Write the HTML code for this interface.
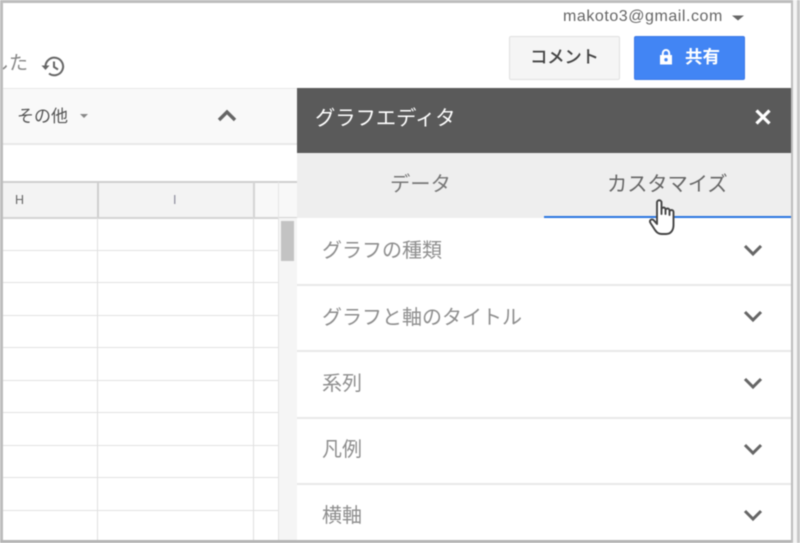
<!DOCTYPE html>
<html><head><meta charset="utf-8"><style>
html,body{margin:0;padding:0;background:#fff}
#p{position:relative;width:800px;height:543px;overflow:hidden;background:#fff;font-family:"Liberation Sans","Noto Sans CJK JP",sans-serif;filter:blur(.5px)}
#p div{position:absolute;box-sizing:border-box}
.t{white-space:nowrap;line-height:1}
.hl{left:3px;width:275px;height:1px;background:#e2e2e2}
.vl{top:218px;width:1px;height:322px;background:#e0e0e0}
.sep{left:297px;width:494px;height:2px;background:#e8e8e8}
.lab{left:322px;font-size:20px;color:#8e8e8e}
svg{position:absolute}
</style></head><body><div id="p">
<div class="t" style="left:563px;top:9px;font-size:16px;color:#666;letter-spacing:.55px">makoto3@gmail.com</div>
<svg style="left:732px;top:15px" width="12" height="6"><path d="M0 0.500H12L6 5.500Z" fill="#666"/></svg>
<div style="left:509px;top:36px;width:111px;height:44px;background:#f5f5f5;border:1px solid #e0e0e0;border-radius:2px"></div>
<div class="t" style="left:530px;top:49px;font-size:17.500px;font-weight:500;color:#444;letter-spacing:-.35px">コメント</div>
<div style="left:634px;top:36px;width:111px;height:44px;background:#4285f4;border:1px solid #3b78e7;border-radius:2px"></div>
<svg style="left:659px;top:49px" width="14" height="16" viewBox="0 0 14 16"><path d="M1 6H13V15.500H1Z" fill="#fff"/><path d="M3.800 6V4.200A3.200 3.200 0 0 1 10.200 4.200V6" fill="none" stroke="#fff" stroke-width="2"/><circle cx="7" cy="10.700" r="1.700" fill="#4285f4"/></svg>
<div class="t" style="left:685px;top:49px;font-size:17.500px;font-weight:bold;color:#fff">共有</div>
<div class="t" style="left:3px;top:54px;width:25px;overflow:hidden;font-size:19px;color:#888;text-align:right;direction:rtl">した</div>
<svg style="left:40px;top:54px" width="26" height="24" viewBox="0 0 26 24"><path d="M5.500 12.500A8.800 8.800 0 1 1 9 19.500" fill="none" stroke="#666" stroke-width="2"/><path d="M1.500 11.500H9.500L5.500 16Z" fill="#666"/><path d="M14 7.500V13L18 15.500" fill="none" stroke="#666" stroke-width="2"/></svg>
<div style="left:3px;top:88px;width:294px;height:57px;background:#f9f9f9;border-top:1px solid #e8e8e8;border-bottom:2px solid #e8e8e8"></div>
<div class="t" style="left:17px;top:108px;font-size:17px;color:#555">その他</div>
<svg style="left:80px;top:114px" width="8" height="4"><path d="M0 0H8L4 4Z" fill="#888"/></svg>
<svg style="left:217px;top:108px" width="20" height="14"><path d="M2 12L10 4L18 12" fill="none" stroke="#666" stroke-width="3.400"/></svg>
<div style="left:3px;top:181px;width:294px;height:38px;background:#f3f3f3;border-top:2px solid #cfcfcf;border-bottom:2px solid #d4d4d4"></div>
<div style="left:255px;top:183px;width:42px;height:34px;background:#f8f8f8"></div>
<div style="left:97px;top:182px;width:2px;height:36px;background:#cfcfcf"></div>
<div style="left:253px;top:182px;width:2px;height:36px;background:#d4d4d4"></div>
<div style="left:278px;top:182px;width:1px;height:36px;background:#e6e6e6"></div>
<div class="t" style="left:15px;top:194px;font-size:12.500px;color:#666">H</div>
<div class="t" style="left:173px;top:194px;font-size:12.500px;color:#889">I</div>
<div class="hl" style="top:250px"></div><div class="hl" style="top:282px"></div><div class="hl" style="top:315px"></div><div class="hl" style="top:347px"></div><div class="hl" style="top:380px"></div><div class="hl" style="top:412px"></div><div class="hl" style="top:445px"></div><div class="hl" style="top:477px"></div><div class="hl" style="top:510px"></div>
<div class="vl" style="left:97px"></div><div class="vl" style="left:253px"></div>
<div style="left:278px;top:218px;width:19px;height:322px;background:#f5f5f5;border-left:1px solid #e4e4e4"></div>
<div style="left:281px;top:221px;width:13px;height:40px;background:#c3c3c3"></div>
<div style="left:297px;top:88px;width:494px;height:65px;background:#5a5a5a"></div>
<div class="t" style="left:315px;top:109px;font-size:20.300px;color:#fff">グラフエディタ</div>
<svg style="left:754px;top:108px" width="18" height="18"><path d="M2.500 2.500L15.500 15.500M15.500 2.500L2.500 15.500" stroke="#fff" stroke-width="3.200"/></svg>
<div style="left:297px;top:153px;width:494px;height:65px;background:#eeeeee"></div>
<div class="t" style="left:390px;top:175px;font-size:20.300px;color:#777">データ</div>
<div class="t" style="left:607px;top:175px;font-size:20.200px;color:#666">カスタマイズ</div>
<div style="left:544px;top:216px;width:247px;height:2px;background:#2a75e0"></div>
<div style="left:297px;top:218px;width:494px;height:322px;background:#fff"></div>
<div class="t lab" style="top:241px">グラフの種類</div>
<div class="t lab" style="top:308px">グラフと軸のタイトル</div>
<div class="t lab" style="top:374px">系列</div>
<div class="t lab" style="top:440px">凡例</div>
<div class="t lab" style="top:506px">横軸</div>
<div class="sep" style="top:284px"></div><div class="sep" style="top:350px"></div><div class="sep" style="top:417px"></div><div class="sep" style="top:483px"></div>
<svg style="left:743px;top:245px" width="20" height="280" fill="none" stroke="#666" stroke-width="3"><path d="M2 1L10 9L18 1M2 67L10 75L18 67M2 134L10 142L18 134M2 200L10 208L18 200M2 266L10 274L18 266"/></svg>
<svg style="left:648px;top:197px" width="30" height="40" viewBox="0 0 30 40"><path d="M9 27V5.500A2.200 2.200 0 0 1 13.500 5.500V17V12.500A2 2 0 0 1 17.500 12.500V17V13.500A2 2 0 0 1 21.500 13.500V18V15A2 2 0 0 1 25.500 15V28C25.500 33 23 37 18 37H14C10 37 8.500 35 7 33L2.500 26C1 23.500 3 21.500 5.500 23Z" fill="#fff" stroke="#444" stroke-width="1.900" stroke-linejoin="round"/></svg>
<div style="left:0;top:0;width:800px;height:3px;background:#bdbdbd"></div>
<div style="left:0;top:0;width:3px;height:543px;background:#bdbdbd"></div>
<div style="left:0;top:540px;width:800px;height:3px;background:#b5b5b5"></div>
<div style="left:791px;top:0;width:2px;height:543px;background:#bdbdbd"></div>
<div style="left:793px;top:0;width:4px;height:543px;background:#f4f4f4"></div>
<div style="left:797px;top:0;width:3px;height:543px;background:#c8c8c8"></div>
</div></body></html>
